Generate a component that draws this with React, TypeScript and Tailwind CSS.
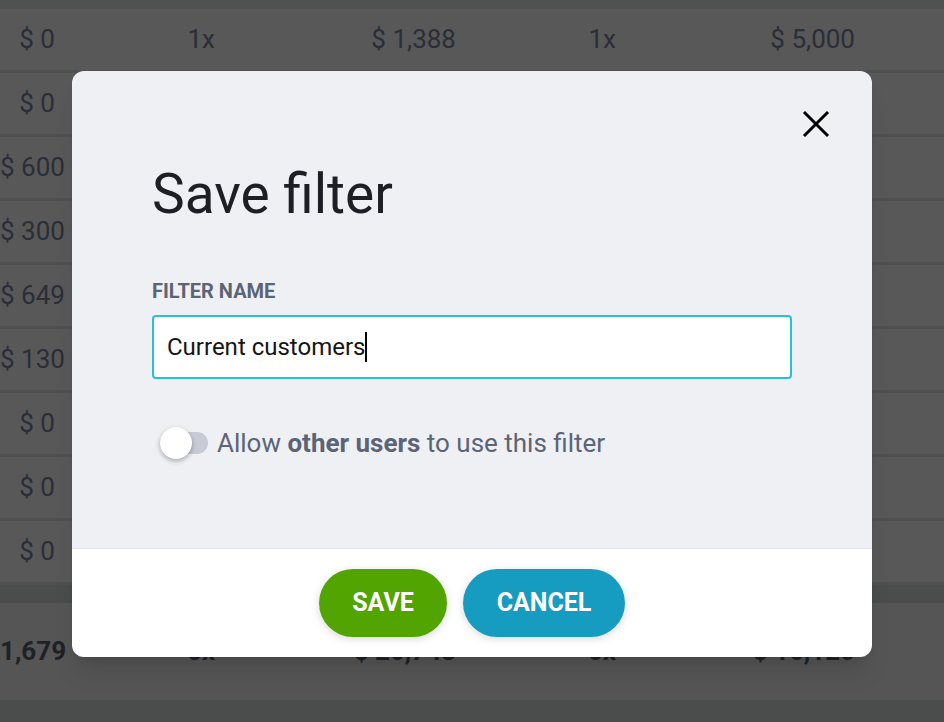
import React from 'react';

const rows = [
    ['$ 0', '1x', '$ 1,388', '1x', '$ 5,000'],
    ['$ 0', '', '', '', ''],
    ['$ 600', '', '', '', ''],
    ['$ 300', '', '', '', ''],
    ['$ 649', '', '', '', ''],
    ['$ 130', '', '', '', ''],
    ['$ 0', '', '', '', ''],
    ['$ 0', '', '', '', ''],
    ['$ 0', '', '', '', ''],
];

const widths = ['w-[55px]', 'w-[160px]', 'w-[241px]', 'w-[160px]', 'w-[239px]'];

const Row = ({ cells, bold }: { cells: string[]; bold?: boolean }) => (
    <div className="flex items-center h-full">
        {cells.map((c, i) => (
            <div key={i} className={`${widths[i]} shrink-0 text-right whitespace-nowrap ${bold ? 'font-bold text-[#1f2127]' : 'text-[#2b2e36]'}`}>
                {c}
            </div>
        ))}
    </div>
);

const App = () => {
    return (
        <div className="relative w-[944px] h-[722px] overflow-hidden bg-[#4b4c4c] text-[26px] font-['Roboto',sans-serif]">
            {/* table behind the overlay */}
            <div className="flex flex-col">
                <div className="h-[9px] bg-[#505151]" />
                {rows.map((r, i) => (
                    <div key={i} className="h-[64px] bg-[#585858] border-b-[3px] border-[#4f5050] overflow-hidden">
                        <Row cells={r} />
                    </div>
                ))}
                <div className="h-[18px] bg-[#4b4c4c]" />
                <div className="h-[97px] bg-[#555555]">
                    <Row cells={['1,679', '6x', '$ 20,748', '6x', '$ 16,120']} bold />
                </div>
            </div>

            {/* modal */}
            <div className="absolute left-[72px] top-[71px] w-[800px] h-[586px] rounded-[12px] overflow-hidden shadow-xl flex flex-col">
                <div className="relative flex-1 bg-[#eff0f4] px-20 pt-[91px]">
                    <button className="absolute right-[42px] top-[39px] w-[28px] h-[28px]">
                        <svg viewBox="0 0 28 28" width="28" height="28">
                            <path d="M2 2 L26 26 M26 2 L2 26" stroke="#000" strokeWidth="3" fill="none" />
                        </svg>
                    </button>
                    <h1 className="text-[55px] leading-[65px] font-normal text-[#1d1f25]">Save filter</h1>
                    <div className="mt-[51px] text-[20px] leading-[26px] font-bold uppercase text-[#5b6476]">Filter name</div>
                    <div className="mt-[11px] h-[64px] w-[640px] bg-white border-2 border-[#26c0d8] rounded-[4px] flex items-center px-[13px]">
                        <span className="text-[24px] text-[#151515]">Current customers</span>
                        <span className="w-[2px] h-[30px] bg-black" />
                    </div>
                    <div className="mt-[48px] flex items-center h-[32px] pl-[8px]">
                        <div className="relative w-[48px] h-[22px] rounded-full bg-[#c7cbd5]">
                            <div className="absolute left-0 top-1/2 -translate-y-1/2 w-[32px] h-[32px] rounded-full bg-white shadow-[0_2px_5px_rgba(0,0,0,0.3)]" />
                        </div>
                        <span className="ml-[9px] text-[26px] text-[#5b6476]">
                            Allow <span className="font-bold">other users</span> to use this filter
                        </span>
                    </div>
                </div>
                <div className="h-[109px] bg-white border-t border-[#e3e5ea] flex items-center justify-center gap-4">
                    <button className="w-[128px] h-[68px] rounded-full bg-[#52a400] text-white text-[25px] font-bold shadow-[0_2px_8px_rgba(0,0,0,0.15)]">
                        SAVE
                    </button>
                    <button className="w-[162px] h-[68px] rounded-full bg-[#169bc1] text-white text-[25px] font-bold shadow-[0_2px_8px_rgba(0,0,0,0.15)]">
                        CANCEL
                    </button>
                </div>
            </div>
        </div>
    );
};

export default App;
